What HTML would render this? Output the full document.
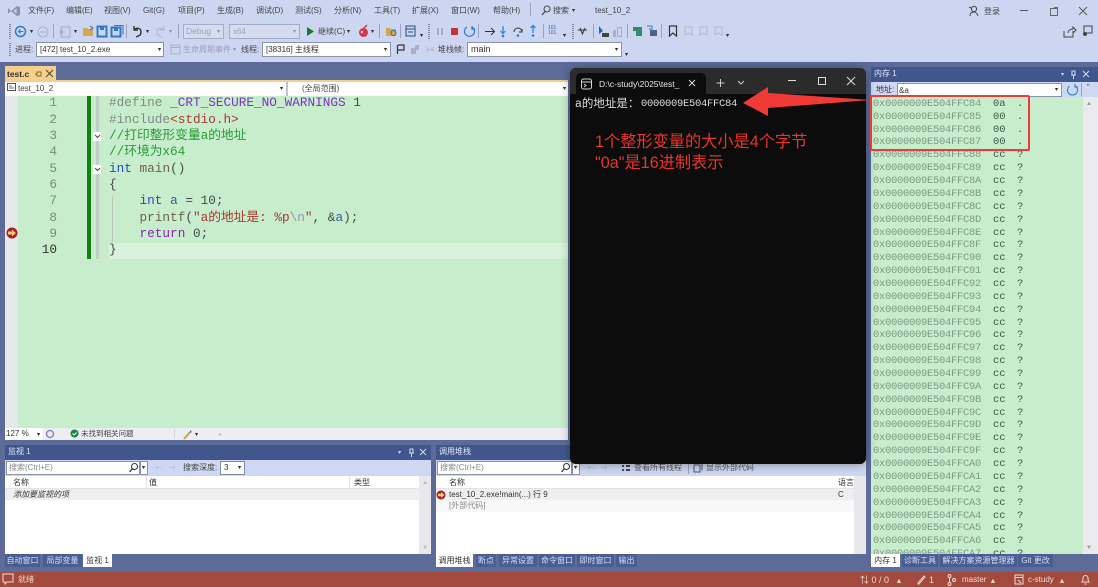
<!DOCTYPE html>
<html><head><meta charset="utf-8"><style>
html,body{margin:0;padding:0;background:#cdd6f1}
#r{position:relative;width:1098px;height:587px;overflow:hidden;background:#cdd6f1;font-family:"Liberation Sans","Noto Sans CJK SC",sans-serif;font-size:8px;color:#333;filter:blur(.3px)}
#r div,#r svg{position:absolute}
.t{white-space:nowrap;line-height:12px}
.m{top:5px;color:#444;font-size:8px}
.a{font-size:6px;line-height:8px;transform:scaleX(1.1)}
.box{background:#fff;border:1px solid #8a93ad;box-sizing:border-box;white-space:nowrap;line-height:13px;padding-left:3px;color:#333;font-size:8px}
.code{font-family:"Liberation Mono","Noto Sans CJK SC",monospace;font-size:12.73px;line-height:16px;white-space:pre;color:#4a4a4a}
.ln{font-family:"Liberation Mono",monospace;font-size:12.73px;line-height:16px;color:#7b8a80;width:20px;text-align:right;left:37px}
.kw{color:#2a45c8}.pp{color:#808a84}.mac{color:#7b35c0}.str{color:#a83a32}.ret{color:#8a25b8}.fn{color:#6f6248}.var{color:#2a6098}.esc{color:#8a9aa8}
.mem{left:873px;font-family:"Liberation Mono",monospace;font-size:10.5px;letter-spacing:-.3px;line-height:13px;white-space:pre;color:#7f9a85}
.mv{left:993px;font-family:"Liberation Mono",monospace;font-size:10.5px;line-height:13px;white-space:pre;color:#3b5a45}
.mc{left:1017px;font-family:"Liberation Mono",monospace;font-size:10.5px;line-height:13px;white-space:pre;color:#3b5a45}
.pt{background:#40568d;color:#e3e8f5;line-height:14px;padding-left:3px;box-sizing:border-box;font-size:8px}
.tab{top:554px;height:13px;line-height:13px;text-align:center;font-size:8px;color:#d5dcf2;background:#4a5e94;white-space:nowrap}
.tab.on{background:#fff;color:#333}
.sep{width:1px;background:#9aa3bd}
.st{color:#eedad6;font-size:8px}
</style></head><body><div id="r">

<!-- title bar -->
<svg style="left:7px;top:5px" width="14" height="12" viewBox="0 0 14 12"><path d="M1 3l3 3-3 3zM4 6l6-5 3 1v8l-3 1z" fill="#8a92ab"/><path d="M9.500 3.500L6.500 6l3 2.500z" fill="#cdd6f1"/></svg>
<div class="t m" style="left:28px">文件(F)</div>
<div class="t m" style="left:66px">编辑(E)</div>
<div class="t m" style="left:104px">视图(V)</div>
<div class="t m" style="left:143px">Git(G)</div>
<div class="t m" style="left:178px">项目(P)</div>
<div class="t m" style="left:217px">生成(B)</div>
<div class="t m" style="left:256px">调试(D)</div>
<div class="t m" style="left:295px">测试(S)</div>
<div class="t m" style="left:334px">分析(N)</div>
<div class="t m" style="left:374px">工具(T)</div>
<div class="t m" style="left:412px">扩展(X)</div>
<div class="t m" style="left:451px">窗口(W)</div>
<div class="t m" style="left:493px">帮助(H)</div>
<div class="sep" style="left:530px;top:3px;height:13px"></div>
<svg style="left:541px;top:5px" width="10" height="11" viewBox="0 0 10 11"><circle cx="6" cy="4" r="3" fill="none" stroke="#444"/><path d="M4 6.500L1 10" stroke="#444" stroke-width="1.300"/></svg>
<div class="t m" style="left:553px">搜索</div>
<div class="t a" style="left:572px;top:7px">▾</div>
<div class="t m" style="left:595px">test_10_2</div>
<svg style="left:968px;top:5px" width="12" height="12" viewBox="0 0 12 12"><circle cx="6" cy="4" r="2.600" fill="none" stroke="#444"/><path d="M1 2l2 1M2 11c0-3 2-4 4-4s3 1 4 4" fill="none" stroke="#444"/></svg>
<div class="t m" style="left:984px;top:6px">登录</div>
<div style="left:1020px;top:10px;width:8px;height:1px;background:#555"></div>
<div style="left:1050px;top:8px;width:6px;height:6px;border:1px solid #666"></div>
<svg style="left:1054px;top:7px" width="4" height="4"><path d="M0 .5h3.500V4" stroke="#666" fill="none"/></svg>
<svg style="left:1078px;top:6px" width="10" height="10"><path d="M1 1l8 8M9 1l-8 8" stroke="#555"/></svg>

<!-- toolbar 1 -->
<svg style="left:9px;top:24px" width="3" height="15"><path d="M1 0v15" stroke="#7d869f" stroke-dasharray="1 1" stroke-width="2"/></svg>
<svg style="left:14px;top:25px" width="13" height="13"><circle cx="6.500" cy="6.500" r="5" fill="none" stroke="#2b7cd3" stroke-width="1.500"/><path d="M9.500 6.500H4.500M6.500 4.500l-2 2 2 2" stroke="#2b7cd3" fill="none"/></svg>
<div class="t a" style="left:30px;top:28px">▾</div>
<svg style="left:37px;top:26px" width="12" height="12"><circle cx="6" cy="6" r="5" fill="none" stroke="#aab2c8"/><path d="M3 6h6" stroke="#aab2c8"/></svg>
<div class="sep" style="left:53px;top:24px;height:14px"></div>
<svg style="left:59px;top:25px" width="14" height="13"><rect x="2" y="2" width="9" height="10" fill="none" stroke="#a4adc4"/><path d="M0 7h6M3 4v6" stroke="#a4adc4"/></svg>
<div class="t a" style="left:74px;top:28px">▾</div>
<svg style="left:82px;top:25px" width="13" height="12"><path d="M1 3h4l1 1h5v7H1z" fill="#d3a84c"/><path d="M8 1l3 2-3 2" stroke="#39689e" fill="none"/></svg>
<svg style="left:96px;top:25px" width="13" height="13"><rect x="1.500" y="1.500" width="9" height="10" fill="none" stroke="#3079c9" stroke-width="2"/><rect x="4" y="2" width="4" height="3" fill="#3079c9"/></svg>
<svg style="left:110px;top:25px" width="14" height="13"><rect x="1.500" y="2.500" width="9" height="9" fill="none" stroke="#3079c9" stroke-width="2"/><rect x="4" y="3" width="4" height="3" fill="#3079c9"/><path d="M4 .5h9v9" stroke="#3079c9" fill="none"/></svg>
<div class="sep" style="left:126px;top:24px;height:14px"></div>
<svg style="left:131px;top:25px" width="13" height="13"><path d="M3 1v4h4M3 5c3-3 7-2 7 2s-3 4-5 5" fill="none" stroke="#333" stroke-width="1.400"/></svg>
<div class="t a" style="left:146px;top:28px">▾</div>
<svg style="left:154px;top:25px" width="13" height="13"><path d="M10 1v4H6M10 5C7 2 3 3 3 7s3 4 5 5" fill="none" stroke="#b2bad0" stroke-width="1.300"/></svg>
<div class="t a" style="left:169px;top:28px;color:#8e97ad">▾</div>
<div class="sep" style="left:178px;top:24px;height:14px"></div>
<div class="box" style="left:183px;top:24px;width:41px;height:15px;background:#d6dcef;color:#9aa2b8;border-color:#a4adc5;font-size:8.500px;padding-left:2px">Debug</div>
<div class="t a" style="left:217px;top:28px;color:#8e97ad">▾</div>
<div class="box" style="left:229px;top:24px;width:71px;height:15px;background:#d6dcef;color:#9aa2b8;border-color:#a4adc5;padding-left:3px">x64</div>
<div class="t a" style="left:293px;top:28px;color:#8e97ad">▾</div>
<svg style="left:306px;top:26px" width="9" height="11"><path d="M1 1l7 4.500L1 10z" fill="#167c2a"/></svg>
<div class="t m" style="left:318px;top:26px">继续(C)</div>
<div class="t a" style="left:347px;top:28px">▾</div>
<svg style="left:358px;top:24px" width="11" height="14"><circle cx="5.500" cy="8.500" r="4.500" fill="#d8334a"/><path d="M6 4l3-3" stroke="#c5402a" stroke-width="1.500"/><circle cx="4" cy="8" r="1.300" fill="#f4c1b8"/></svg>
<div class="t a" style="left:371px;top:28px">▾</div>
<div class="sep" style="left:379px;top:24px;height:14px"></div>
<svg style="left:385px;top:25px" width="12" height="13"><path d="M1 3h4l1 1h5v7H1z" fill="#d3a84c"/><circle cx="8.500" cy="8" r="2.500" fill="none" stroke="#39689e"/></svg>
<div class="sep" style="left:400px;top:24px;height:14px"></div>
<svg style="left:405px;top:25px" width="12" height="12"><rect x="1" y="1" width="9" height="10" fill="none" stroke="#264f78"/><path d="M1 4h9M3 7h5" stroke="#264f78"/></svg>
<div class="t a" style="left:420px;top:32px">▾</div>
<svg style="left:428px;top:24px" width="3" height="15"><path d="M1 0v15" stroke="#7d869f" stroke-dasharray="1 1" stroke-width="2"/></svg>
<div style="left:437px;top:28px;width:2px;height:7px;background:#a3abc2"></div>
<div style="left:441px;top:28px;width:2px;height:7px;background:#a3abc2"></div>
<div style="left:451px;top:28px;width:7px;height:7px;background:#c8303a"></div>
<svg style="left:463px;top:25px" width="13" height="13"><path d="M9 2a5 5 0 1 1-5 0M9 1v3h3" fill="none" stroke="#2b7cd3" stroke-width="1.200"/></svg>
<div class="sep" style="left:478px;top:24px;height:14px"></div>
<svg style="left:484px;top:26px" width="11" height="11"><path d="M1 5.500h9M7 2l3.500 3.500L7 9" fill="none" stroke="#333"/></svg>
<svg style="left:499px;top:25px" width="8" height="13"><path d="M4 1v7M1.500 6L4 8.500 6.500 6" fill="none" stroke="#2b7cd3" stroke-width="1.200"/><circle cx="4" cy="11" r="1.300" fill="#2b7cd3"/></svg>
<svg style="left:512px;top:25px" width="12" height="13"><path d="M2 7a4 4 0 0 1 8 0M10 4v3H7" fill="none" stroke="#333"/><circle cx="6" cy="10.500" r="1.300" fill="#2b7cd3"/></svg>
<svg style="left:529px;top:24px" width="8" height="13"><path d="M4 9V2M1.500 4L4 1.500 6.500 4" fill="none" stroke="#2b7cd3" stroke-width="1.200"/><circle cx="4" cy="11.500" r="1.300" fill="#2b7cd3"/></svg>
<div class="sep" style="left:543px;top:24px;height:14px"></div>
<div class="t" style="left:548px;top:26px;font-size:5px;color:#3b5f91;line-height:5px">101<br>101</div>
<div class="t a" style="left:563px;top:32px">▾</div>
<svg style="left:572px;top:24px" width="3" height="15"><path d="M1 0v15" stroke="#7d869f" stroke-dasharray="1 1" stroke-width="2"/></svg>
<svg style="left:577px;top:26px" width="11" height="10"><path d="M1 4h9M3 2l2.500 6L8 2" fill="none" stroke="#333"/></svg>
<div class="sep" style="left:593px;top:24px;height:14px"></div>
<svg style="left:598px;top:25px" width="12" height="13"><path d="M1 1v8l4-3z" fill="#1a6bb5"/><rect x="4" y="8" width="7" height="4" fill="#444"/></svg>
<svg style="left:612px;top:26px" width="11" height="12"><rect x="1" y="4" width="3" height="7" fill="#a9b1c7"/><rect x="5.500" y="1.500" width="4" height="9" fill="none" stroke="#a9b1c7"/></svg>
<div class="sep" style="left:627px;top:24px;height:14px"></div>
<svg style="left:633px;top:26px" width="10" height="11"><path d="M0 1h9v9H3V5H0z" fill="#2f8a70"/></svg>
<svg style="left:646px;top:25px" width="12" height="12"><path d="M4 5h7v6H4z" fill="#50627f"/><path d="M1 1h5v3H3" fill="none" stroke="#2b7cd3"/></svg>
<div class="sep" style="left:661px;top:24px;height:14px"></div>
<svg style="left:668px;top:25px" width="10" height="12"><path d="M1.500 1h7v10L5 8l-3.500 3z" fill="none" stroke="#333" stroke-width="1.200"/></svg>
<svg style="left:683px;top:26px" width="11" height="11"><path d="M2 1h7v8L5.500 7 2 9z" fill="none" stroke="#b2bad0"/></svg>
<svg style="left:698px;top:26px" width="11" height="11"><path d="M2 1h7v8L5.500 7 2 9z" fill="none" stroke="#b2bad0"/></svg>
<svg style="left:713px;top:26px" width="11" height="11"><path d="M2 1h7v8L5.500 7 2 9z" fill="none" stroke="#b2bad0"/></svg>
<div class="t a" style="left:726px;top:32px">▾</div>
<svg style="left:1063px;top:26px" width="14" height="12"><path d="M1 5v6h9V7M5 7c0-3 3-4 5-4V1l3 3-3 3V5" fill="none" stroke="#444"/></svg>
<svg style="left:1081px;top:25px" width="13" height="13"><rect x="3" y="1" width="8" height="7" fill="none" stroke="#444"/><circle cx="4" cy="9" r="2" fill="#444"/></svg>

<!-- toolbar 2 -->
<svg style="left:9px;top:43px" width="3" height="14"><path d="M1 0v14" stroke="#7d869f" stroke-dasharray="1 1" stroke-width="2"/></svg>
<div class="t m" style="left:15px;top:44px">进程:</div>
<div class="box" style="left:36px;top:42px;width:128px;height:15px">[472] test_10_2.exe</div>
<div class="t a" style="left:158px;top:46px">▾</div>
<svg style="left:170px;top:44px" width="11" height="11"><rect x="1" y="1" width="9" height="9" fill="none" stroke="#a7afc6"/><path d="M1 3.500h9" stroke="#a7afc6"/></svg>
<div class="t m" style="left:183px;top:44px;color:#99a1b8">生命周期事件</div>
<div class="t a" style="left:233px;top:46px;color:#8e97ad">▾</div>
<div class="t m" style="left:241px;top:44px">线程:</div>
<div class="box" style="left:262px;top:42px;width:129px;height:15px">[38316] 主线程</div>
<div class="t a" style="left:384px;top:46px">▾</div>
<svg style="left:396px;top:44px" width="10" height="11"><path d="M1.500 1v9M2 1h6v5H2" fill="none" stroke="#333" stroke-width="1.200"/></svg>
<svg style="left:410px;top:44px" width="10" height="11"><rect x="1" y="4" width="5" height="6" fill="#a9b1c7"/><rect x="5" y="1" width="4" height="5" fill="#a9b1c7"/></svg>
<svg style="left:425px;top:46px" width="10" height="7"><path d="M1 3.500h8M1 1l3 2.500L1 6M9 1L6 3.500 9 6" fill="none" stroke="#b5bcd1"/></svg>
<div class="t m" style="left:438px;top:44px">堆栈帧:</div>
<div class="box" style="left:467px;top:42px;width:155px;height:15px;font-size:9px">main</div>
<div class="t a" style="left:615px;top:46px">▾</div>
<div class="t a" style="left:625px;top:51px">▾</div>

<!-- dark band -->
<div style="left:0;top:62px;width:1098px;height:510px;background:#5d6b99"></div>

<!-- doc tab -->
<div style="left:5px;top:66px;width:51px;height:15px;background:#f5cf8b"></div>
<div class="t" style="left:7px;top:68px;font-weight:bold;font-size:8.500px;color:#333">test.c</div>
<svg style="left:35px;top:71px" width="7" height="6"><path d="M0 3h2M2 1h4v4H2z" fill="none" stroke="#8a6a2d"/></svg>
<svg style="left:45px;top:69px" width="9" height="9"><path d="M1 1l7 7M8 1L1 8" stroke="#55442a"/></svg>
<div style="left:5px;top:80px;width:563px;height:2px;background:#f5cf8b"></div>

<!-- nav bar -->
<div style="left:5px;top:82px;width:563px;height:14px;background:#fff"></div>
<svg style="left:7px;top:83px" width="9" height="9"><rect x=".5" y=".5" width="8" height="7" fill="none" stroke="#555"/><path d="M2 3h3M2 5h5" stroke="#7b5ea8"/></svg>
<div class="t" style="left:18px;top:83px;color:#444">test_10_2</div>
<div class="t a" style="left:280px;top:85px">▾</div>
<div style="left:286px;top:82px;width:2px;height:14px;background:#bcc4d9"></div>
<div class="t" style="left:302px;top:83px;color:#444">(全局范围)</div>
<div class="t a" style="left:563px;top:85px">▾</div>

<!-- editor -->
<div style="left:5px;top:96px;width:563px;height:332px;background:#c7edcc"></div>
<div style="left:5px;top:96px;width:13px;height:332px;background:#e6e7e9"></div>
<div style="left:87px;top:96px;width:4px;height:163px;background:#128012"></div>
<div style="left:96px;top:96px;width:3px;height:163px;background:#c0cfc4"></div>
<div style="left:109px;top:243px;width:459px;height:16px;background:#d8f2dc"></div>
<div style="left:112px;top:196px;width:1px;height:46px;background:#b5c9b9"></div>

<div class="ln" style="top:95px">1</div>
<div class="ln" style="top:112px">2</div>
<div class="ln" style="top:128px">3</div>
<div class="ln" style="top:144px">4</div>
<div class="ln" style="top:161px">5</div>
<div class="ln" style="top:177px">6</div>
<div class="ln" style="top:193px">7</div>
<div class="ln" style="top:210px">8</div>
<div class="ln" style="top:226px">9</div>
<div class="ln" style="top:242px;color:#333">10</div>

<div style="left:93px;top:132px;width:8px;height:9px;background:#fff"></div>
<svg style="left:94px;top:134px" width="7" height="5"><path d="M1 1l2.500 2.500L6 1" fill="none" stroke="#444"/></svg>
<div style="left:93px;top:165px;width:8px;height:9px;background:#fff"></div>
<svg style="left:94px;top:167px" width="7" height="5"><path d="M1 1l2.500 2.500L6 1" fill="none" stroke="#444"/></svg>

<div class="code" style="left:109px;top:95px"><span class="pp">#define</span> <span class="mac">_CRT_SECURE_NO_WARNINGS</span> 1</div>
<div class="code" style="left:109px;top:112px"><span class="pp">#include</span><span class="str">&lt;stdio.h&gt;</span></div>
<div class="code" style="left:109px;top:128px;color:#2b9a3a">//打印整形变量a的地址</div>
<div class="code" style="left:109px;top:144px;color:#2b9a3a">//环境为x64</div>
<div class="code" style="left:109px;top:161px"><span class="kw">int</span> <span class="fn">main</span>()</div>
<div class="code" style="left:109px;top:177px">{</div>
<div class="code" style="left:109px;top:193px">    <span class="kw">int</span> <span class="var">a</span> = 10;</div>
<div class="code" style="left:109px;top:210px">    <span class="fn">printf</span>(<span class="str">"a的地址是: %p</span><span class="esc">\n</span><span class="str">"</span>, &amp;<span class="var">a</span>);</div>
<div class="code" style="left:109px;top:226px">    <span class="ret">return</span> 0;</div>
<div class="code" style="left:109px;top:242px">}</div>

<svg style="left:6px;top:227px" width="12" height="12"><circle cx="6" cy="6" r="5.500" fill="#a81c2c"/><path d="M2 4.500h4V2.500L10 6 6 9.500v-2H2z" fill="#f4cf6e"/></svg>

<!-- editor bottom bar -->
<div style="left:5px;top:428px;width:563px;height:12px;background:#eceef3"></div>
<div class="box" style="left:5px;top:428px;width:38px;height:12px;border:none;line-height:12px;padding-left:1px">127 %</div>
<div class="t a" style="left:37px;top:431px">▾</div>
<svg style="left:45px;top:429px" width="9" height="11"><circle cx="5" cy="5" r="3.500" fill="none" stroke="#6d7fb8" stroke-width="1.300"/></svg>
<svg style="left:70px;top:429px" width="9" height="9"><circle cx="4.500" cy="4.500" r="4" fill="#168a3a"/><path d="M2.500 4.500l1.500 1.500 2.500-2.500" fill="none" stroke="#fff"/></svg>
<div class="t" style="left:81px;top:428px;color:#444;font-size:7.500px">未找到相关问题</div>
<div class="sep" style="left:174px;top:429px;height:10px;background:#d0d4de"></div>
<svg style="left:183px;top:429px" width="10" height="11"><path d="M1 10L7 3" stroke="#c9a23a" stroke-width="2"/><path d="M7 1l2 2-2 1z" fill="#3a74b4"/></svg>
<div class="t a" style="left:195px;top:431px">▾</div>
<div class="t a" style="left:218px;top:431px;color:#b8bcc6">◂</div>

<!-- watch panel -->
<div class="pt" style="left:5px;top:445px;width:426px;height:15px">监视 1</div>
<div class="t a" style="left:398px;top:449px;color:#c8d1ea">▾</div>
<svg style="left:408px;top:448px" width="7" height="9"><path d="M2 1h3v4H2zM1 5h5M3.500 5v4" fill="none" stroke="#d3daef"/></svg>
<svg style="left:419px;top:448px" width="8" height="8"><path d="M1 1l6 6M7 1L1 7" stroke="#d3daef"/></svg>
<div style="left:5px;top:460px;width:426px;height:16px;background:#cfd8f2"></div>
<div class="box" style="left:6px;top:461px;width:134px;height:14px;color:#888;line-height:12px;padding-left:2px">搜索(Ctrl+E)</div>
<div class="box" style="left:140px;top:461px;width:8px;height:14px;padding:0"></div>
<svg style="left:128px;top:462px" width="11" height="11"><circle cx="6.500" cy="4.500" r="3" fill="none" stroke="#333"/><path d="M4.500 6.500L1.500 10" stroke="#333" stroke-width="1.300"/></svg>
<div class="t a" style="left:142px;top:464px">▾</div>
<div class="t" style="left:154px;top:461px;color:#a6adc2;font-size:10px">←&nbsp;→</div>
<div class="t m" style="left:183px;top:462px">搜索深度:</div>
<div class="box" style="left:220px;top:461px;width:25px;height:14px;line-height:12px;border-color:#7d8aa8">3</div>
<div class="t a" style="left:238px;top:464px">▾</div>
<div style="left:5px;top:476px;width:426px;height:78px;background:#fff"></div>
<div style="left:5px;top:488px;width:414px;height:1px;background:#e2e4e8"></div>
<div style="left:5px;top:489px;width:414px;height:11px;background:#efefef"></div>
<div style="left:146px;top:476px;width:1px;height:12px;background:#e2e4e8"></div>
<div style="left:349px;top:476px;width:1px;height:12px;background:#e2e4e8"></div>
<div class="t" style="left:13px;top:477px">名称</div>
<div class="t" style="left:149px;top:477px">值</div>
<div class="t" style="left:354px;top:477px">类型</div>
<div class="t" style="left:13px;top:489px;font-style:italic;color:#333">添加要监视的项</div>
<div style="left:419px;top:476px;width:12px;height:78px;background:#e8e8ec"></div>
<div class="t a" style="left:422px;top:479px;color:#b9b9c2">▲</div>
<div class="t a" style="left:422px;top:544px;color:#b9b9c2">▼</div>

<div class="tab" style="left:5px;width:35px">自动窗口</div>
<div class="tab" style="left:43px;width:39px">局部变量</div>
<div class="tab on" style="left:83px;width:29px">监视 1</div>

<!-- callstack panel -->
<div class="pt" style="left:436px;top:445px;width:430px;height:15px">调用堆栈</div>
<div style="left:436px;top:460px;width:430px;height:16px;background:#cfd8f2"></div>
<div class="box" style="left:437px;top:461px;width:135px;height:14px;color:#888;line-height:12px;padding-left:2px">搜索(Ctrl+E)</div>
<div class="box" style="left:572px;top:461px;width:8px;height:14px;padding:0"></div>
<svg style="left:560px;top:462px" width="11" height="11"><circle cx="6.500" cy="4.500" r="3" fill="none" stroke="#333"/><path d="M4.500 6.500L1.500 10" stroke="#333" stroke-width="1.300"/></svg>
<div class="t a" style="left:574px;top:464px">▾</div>
<div class="t" style="left:586px;top:461px;color:#a6adc2;font-size:10px">←&nbsp;→</div>
<svg style="left:621px;top:464px" width="10" height="8"><path d="M1 1h2v2H1zM5 1h4v2H5zM1 5h2v2H1zM5 5h4v2H5z" fill="#445"/></svg>
<div class="t" style="left:634px;top:462px;color:#555">查看所有线程</div>
<div class="sep" style="left:688px;top:462px;height:12px"></div>
<svg style="left:693px;top:463px" width="10" height="10"><rect x="1" y="2" width="6" height="7" fill="none" stroke="#556"/><path d="M3 .5h6v7" fill="none" stroke="#556"/></svg>
<div class="t" style="left:706px;top:462px;color:#555">显示外部代码</div>
<div style="left:436px;top:476px;width:430px;height:78px;background:#fff"></div>
<div style="left:436px;top:488px;width:418px;height:1px;background:#e2e4e8"></div>
<div style="left:436px;top:489px;width:418px;height:11px;background:#efefef"></div>
<div style="left:436px;top:500px;width:418px;height:12px;background:#f8f8f8"></div>
<div class="t" style="left:449px;top:477px">名称</div>
<div class="t" style="left:838px;top:477px">语言</div>
<svg style="left:436px;top:490px" width="10" height="10"><circle cx="5" cy="5" r="4.500" fill="#a81c2c"/><path d="M2 3.800h3V2l3.500 3L5 8V6.300H2z" fill="#f4cf6e"/></svg>
<div class="t" style="left:449px;top:489px">test_10_2.exe!main(...) 行 9</div>
<div class="t" style="left:838px;top:489px">C</div>
<div class="t" style="left:449px;top:500px;color:#888">[外部代码]</div>
<div style="left:854px;top:476px;width:12px;height:78px;background:#e8e8ec"></div>

<div class="tab on" style="left:436px;width:37px">调用堆栈</div>
<div class="tab" style="left:476px;width:20px">断点</div>
<div class="tab" style="left:499px;width:38px">异常设置</div>
<div class="tab" style="left:539px;width:36px">命令窗口</div>
<div class="tab" style="left:577px;width:37px">即时窗口</div>
<div class="tab" style="left:616px;width:21px">输出</div>

<!-- memory panel -->
<div class="pt" style="left:871px;top:67px;width:227px;height:15px">内存 1</div>
<div class="t a" style="left:1061px;top:71px;color:#c8d1ea">▾</div>
<svg style="left:1070px;top:70px" width="7" height="9"><path d="M2 1h3v4H2zM1 5h5M3.500 5v4" fill="none" stroke="#d3daef"/></svg>
<svg style="left:1082px;top:70px" width="8" height="8"><path d="M1 1l6 6M7 1L1 7" stroke="#d3daef"/></svg>
<div style="left:871px;top:82px;width:227px;height:15px;background:#cfd8f2"></div>
<div class="t" style="left:876px;top:84px">地址:</div>
<div class="box" style="left:897px;top:83px;width:165px;height:14px;padding-left:1px">&amp;a</div>
<div class="t a" style="left:1055px;top:86px">▾</div>
<svg style="left:1066px;top:83px" width="13" height="13"><path d="M9.500 3a5 5 0 1 1-6 0M9 1v3h3" fill="none" stroke="#2b7cd3"/></svg>
<div class="sep" style="left:1081px;top:83px;height:13px"></div>
<div class="t" style="left:1087px;top:82px;font-size:7px">"</div>
<div style="left:871px;top:97px;width:227px;height:457px;background:#c7edcc"></div>
<div style="left:1083px;top:97px;width:15px;height:457px;background:#ebebee"></div>
<div class="t a" style="left:1086px;top:100px;color:#9a9aa4">▲</div>
<div class="t a" style="left:1086px;top:544px;color:#9a9aa4">▼</div>

<div class="mem" style="top:98px">0x0000009E504FFC84</div><div class="mv" style="top:98px">0a</div><div class="mc" style="top:98px">.</div>
<div class="mem" style="top:111px">0x0000009E504FFC85</div><div class="mv" style="top:111px">00</div><div class="mc" style="top:111px">.</div>
<div class="mem" style="top:124px">0x0000009E504FFC86</div><div class="mv" style="top:124px">00</div><div class="mc" style="top:124px">.</div>
<div class="mem" style="top:136px">0x0000009E504FFC87</div><div class="mv" style="top:136px">00</div><div class="mc" style="top:136px">.</div>
<div class="mem" style="top:149px">0x0000009E504FFC88</div><div class="mv" style="top:149px">cc</div><div class="mc" style="top:149px">?</div>
<div class="mem" style="top:162px">0x0000009E504FFC89</div><div class="mv" style="top:162px">cc</div><div class="mc" style="top:162px">?</div>
<div class="mem" style="top:175px">0x0000009E504FFC8A</div><div class="mv" style="top:175px">cc</div><div class="mc" style="top:175px">?</div>
<div class="mem" style="top:188px">0x0000009E504FFC8B</div><div class="mv" style="top:188px">cc</div><div class="mc" style="top:188px">?</div>
<div class="mem" style="top:201px">0x0000009E504FFC8C</div><div class="mv" style="top:201px">cc</div><div class="mc" style="top:201px">?</div>
<div class="mem" style="top:214px">0x0000009E504FFC8D</div><div class="mv" style="top:214px">cc</div><div class="mc" style="top:214px">?</div>
<div class="mem" style="top:227px">0x0000009E504FFC8E</div><div class="mv" style="top:227px">cc</div><div class="mc" style="top:227px">?</div>
<div class="mem" style="top:239px">0x0000009E504FFC8F</div><div class="mv" style="top:239px">cc</div><div class="mc" style="top:239px">?</div>
<div class="mem" style="top:252px">0x0000009E504FFC90</div><div class="mv" style="top:252px">cc</div><div class="mc" style="top:252px">?</div>
<div class="mem" style="top:265px">0x0000009E504FFC91</div><div class="mv" style="top:265px">cc</div><div class="mc" style="top:265px">?</div>
<div class="mem" style="top:278px">0x0000009E504FFC92</div><div class="mv" style="top:278px">cc</div><div class="mc" style="top:278px">?</div>
<div class="mem" style="top:291px">0x0000009E504FFC93</div><div class="mv" style="top:291px">cc</div><div class="mc" style="top:291px">?</div>
<div class="mem" style="top:304px">0x0000009E504FFC94</div><div class="mv" style="top:304px">cc</div><div class="mc" style="top:304px">?</div>
<div class="mem" style="top:317px">0x0000009E504FFC95</div><div class="mv" style="top:317px">cc</div><div class="mc" style="top:317px">?</div>
<div class="mem" style="top:329px">0x0000009E504FFC96</div><div class="mv" style="top:329px">cc</div><div class="mc" style="top:329px">?</div>
<div class="mem" style="top:342px">0x0000009E504FFC97</div><div class="mv" style="top:342px">cc</div><div class="mc" style="top:342px">?</div>
<div class="mem" style="top:355px">0x0000009E504FFC98</div><div class="mv" style="top:355px">cc</div><div class="mc" style="top:355px">?</div>
<div class="mem" style="top:368px">0x0000009E504FFC99</div><div class="mv" style="top:368px">cc</div><div class="mc" style="top:368px">?</div>
<div class="mem" style="top:381px">0x0000009E504FFC9A</div><div class="mv" style="top:381px">cc</div><div class="mc" style="top:381px">?</div>
<div class="mem" style="top:394px">0x0000009E504FFC9B</div><div class="mv" style="top:394px">cc</div><div class="mc" style="top:394px">?</div>
<div class="mem" style="top:407px">0x0000009E504FFC9C</div><div class="mv" style="top:407px">cc</div><div class="mc" style="top:407px">?</div>
<div class="mem" style="top:419px">0x0000009E504FFC9D</div><div class="mv" style="top:419px">cc</div><div class="mc" style="top:419px">?</div>
<div class="mem" style="top:432px">0x0000009E504FFC9E</div><div class="mv" style="top:432px">cc</div><div class="mc" style="top:432px">?</div>
<div class="mem" style="top:445px">0x0000009E504FFC9F</div><div class="mv" style="top:445px">cc</div><div class="mc" style="top:445px">?</div>
<div class="mem" style="top:458px">0x0000009E504FFCA0</div><div class="mv" style="top:458px">cc</div><div class="mc" style="top:458px">?</div>
<div class="mem" style="top:471px">0x0000009E504FFCA1</div><div class="mv" style="top:471px">cc</div><div class="mc" style="top:471px">?</div>
<div class="mem" style="top:484px">0x0000009E504FFCA2</div><div class="mv" style="top:484px">cc</div><div class="mc" style="top:484px">?</div>
<div class="mem" style="top:497px">0x0000009E504FFCA3</div><div class="mv" style="top:497px">cc</div><div class="mc" style="top:497px">?</div>
<div class="mem" style="top:510px">0x0000009E504FFCA4</div><div class="mv" style="top:510px">cc</div><div class="mc" style="top:510px">?</div>
<div class="mem" style="top:522px">0x0000009E504FFCA5</div><div class="mv" style="top:522px">cc</div><div class="mc" style="top:522px">?</div>
<div class="mem" style="top:535px">0x0000009E504FFCA6</div><div class="mv" style="top:535px">cc</div><div class="mc" style="top:535px">?</div>
<div style="left:871px;top:548px;width:212px;height:6px;overflow:hidden">
  <div class="mem" style="left:2px;top:0">0x0000009E504FFCA7</div><div class="mv" style="left:122px;top:0">cc</div><div class="mc" style="left:146px;top:0">?</div>
</div>

<div class="tab on" style="left:871px;width:29px">内存 1</div>
<div class="tab" style="left:902px;width:36px">诊断工具</div>
<div class="tab" style="left:940px;width:77px">解决方案资源管理器</div>
<div class="tab" style="left:1018px;width:35px">Git 更改</div>

<!-- terminal -->
<div style="left:570px;top:68px;width:296px;height:396px;background:#0c0c0c;border-radius:6px;box-shadow:0 1px 10px rgba(0,0,0,.35);overflow:hidden">
  <div style="left:0;top:0;width:296px;height:26px;background:#2b2b2b"></div>
  <div style="left:6px;top:5px;width:130px;height:21px;background:#0c0c0c;border-radius:5px 5px 0 0"></div>
</div>
<svg style="left:581px;top:78px" width="11" height="12"><rect x=".5" y="1" width="10" height="10" rx="2" fill="none" stroke="#d5d5d5"/><path d="M1 4h9" stroke="#d5d5d5"/><path d="M3 6l2 1.500L3 9" stroke="#d5d5d5" fill="none"/></svg>
<div class="t" style="left:599px;top:78px;color:#e8e8e8;font-size:8.500px;width:81px;overflow:hidden">D:\c-study\2025\test_10_2</div>
<svg style="left:688px;top:79px" width="9" height="9"><path d="M1 1l6 6M7 1L1 7" stroke="#ddd"/></svg>
<svg style="left:716px;top:78px" width="9" height="10"><path d="M4.500 1v8M.5 5h8" stroke="#ccc"/></svg>
<svg style="left:737px;top:80px" width="8" height="6"><path d="M1 1l3 3 3-3" stroke="#ccc" fill="none"/></svg>
<div style="left:788px;top:80px;width:8px;height:1px;background:#ddd"></div>
<div style="left:818px;top:77px;width:6px;height:6px;border:1px solid #ddd"></div>
<svg style="left:846px;top:76px" width="10" height="10"><path d="M1 1l8 8M9 1L1 9" stroke="#ddd"/></svg>
<div class="t" style="left:575px;top:98px;color:#ddd;font-size:11.500px;line-height:13px;font-family:'Liberation Mono','Noto Sans CJK SC',monospace;white-space:pre">a的地址是：<span style="position:absolute;left:66px;top:0;font-size:10.500px;letter-spacing:-.3px">0000009E504FFC84</span></div>

<!-- annotation arrow & box -->
<svg style="left:740px;top:84px" width="135" height="36"><path d="M131 16L28 9V3L3 19 28 32V24z" fill="#f03a35"/></svg>
<div style="left:870px;top:95px;width:160px;height:56px;border:2px solid #ea3a3a;border-radius:2px;box-sizing:border-box"></div>
<div class="t" style="left:595px;top:132px;color:#e8352f;font-size:16.200px;line-height:20px">1个整形变量的大小是4个字节</div>
<div class="t" style="left:595px;top:153px;color:#e8352f;font-size:16.200px;line-height:20px">"0a"是16进制表示</div>

<!-- status bar -->
<div style="left:0;top:572px;width:1098px;height:15px;background:#a34a3e"></div>
<svg style="left:2px;top:573px" width="12" height="12"><path d="M1 1h10v8H5L3 11V9H1z" fill="none" stroke="#f0d9d5"/></svg>
<div class="t st" style="left:18px;top:574px">就绪</div>
<div class="t st" style="left:860px;top:574px;font-size:9px">⇅ 0 / 0</div>
<div class="t a st" style="left:897px;top:577px">▴</div>
<svg style="left:916px;top:574px" width="10" height="11"><path d="M2 9l6-7 1 1-6 7H2z" fill="none" stroke="#eedad6"/></svg>
<div class="t st" style="left:929px;top:574px;font-size:9px">1</div>
<svg style="left:947px;top:574px" width="9" height="12"><circle cx="2.500" cy="2" r="1.500" fill="none" stroke="#eedad6"/><circle cx="2.500" cy="10" r="1.500" fill="none" stroke="#eedad6"/><circle cx="7" cy="6" r="1.500" fill="none" stroke="#eedad6"/><path d="M2.500 3.500v5" stroke="#eedad6"/></svg>
<div class="t st" style="left:962px;top:574px">master</div>
<div class="t a st" style="left:991px;top:577px">▴</div>
<svg style="left:1014px;top:574px" width="11" height="11"><rect x="1" y="1" width="8" height="9" fill="none" stroke="#eedad6"/><path d="M1 3.500h8M4 6l3 3" stroke="#eedad6"/></svg>
<div class="t st" style="left:1028px;top:574px">c-study</div>
<div class="t a st" style="left:1060px;top:577px">▴</div>
<svg style="left:1081px;top:574px" width="9" height="11"><path d="M1 8c1-1 1-2 1-4a2.500 2.500 0 0 1 5 0c0 2 0 3 1 4zM3.500 10h2" fill="none" stroke="#eedad6"/></svg>

</div></body></html>
